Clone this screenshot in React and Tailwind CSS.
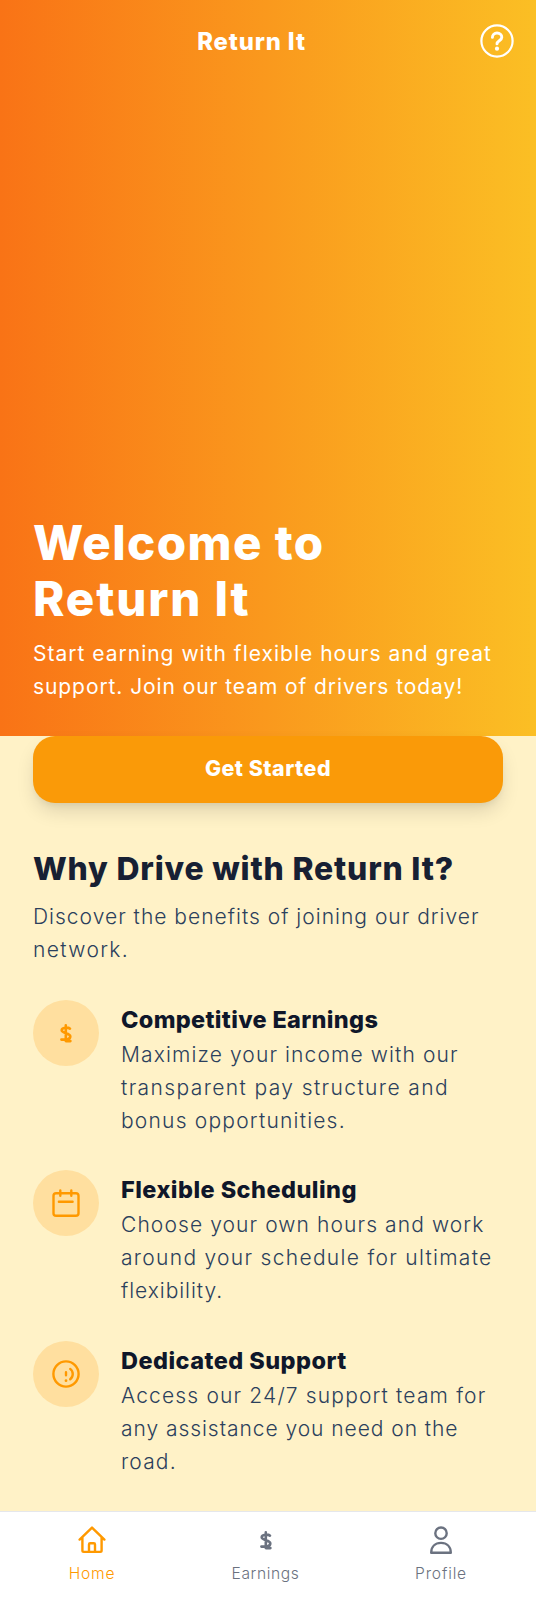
const heading = "font-['Inter','Noto_Sans',sans-serif] font-extrabold";

function Svg({ size = 28, className = "", children }) {
  return (
    <svg
      width={size}
      height={size}
      viewBox={`0 0 ${size} ${size}`}
      fill="none"
      stroke="currentColor"
      strokeWidth="2.4"
      strokeLinecap="round"
      strokeLinejoin="round"
      className={`block shrink-0 ${className}`}
      aria-hidden="true"
    >
      {children}
    </svg>
  );
}

function HelpIcon() {
  return (
    <Svg size={34}>
      <circle cx="17" cy="17" r="15.6" strokeWidth="2.2" />
      <path
        strokeWidth="2.9"
        d="M12.4 13.4C12.4 10.8 14.4 9 17 9C19.9 9 21.8 10.9 21.8 13.2C21.8 16.7 17 16.8 17 19.9"
      />
      <circle cx="17" cy="24.7" r="2.1" fill="currentColor" stroke="none" />
    </Svg>
  );
}

function DollarIcon() {
  return (
    <Svg>
      <path
        strokeWidth="2.6"
        d="M13.8 6.4V22M18 9.7C16.4 8.2 9.7 8 9.7 11.3C9.7 14.7 18.3 13.7 18.3 17.4C18.3 20.2 15.6 20.6 9.4 20.6M13.8 22.1H18.4"
      />
    </Svg>
  );
}

function CalendarIcon() {
  return (
    <Svg>
      <rect x="1.5" y="4.2" width="25" height="22.6" rx="2.6" />
      <path d="M8.3 1.5V6.7M19.3 1.5V6.7M6.9 12.7H20.6" />
    </Svg>
  );
}

function SupportIcon() {
  return (
    <Svg>
      <circle cx="14" cy="14" r="12.6" />
      <path d="M14 12.3V15.3M18.2 8.9C21.6 11.4 21.6 16.8 18.2 19.3" />
      <circle cx="14" cy="20.7" r="1.4" fill="currentColor" stroke="none" />
    </Svg>
  );
}

function HomeIcon() {
  return (
    <Svg>
      <path d="M1.6 13.6L14 1.6L26.4 13.6M4.4 11.4V24.6Q4.4 25.9 5.7 25.9H22.3Q23.6 25.9 23.6 24.6V11.4" />
      <path d="M11 25.4V18.4Q11 17.2 12.2 17.2H15.8Q17 17.2 17 18.4V25.4" />
    </Svg>
  );
}

function ProfileIcon() {
  return (
    <Svg>
      <circle cx="14" cy="7.2" r="5.7" />
      <path d="M4.2 26.7C4.2 20.6 8.2 16.9 14 16.9S23.8 20.6 23.8 26.7Z" />
    </Svg>
  );
}

function Line({ tracking, children }) {
  return <span className={`block whitespace-nowrap ${tracking}`}>{children}</span>;
}

const benefits = [
  {
    icon: <DollarIcon />,
    title: "Competitive Earnings",
    titleTracking: "tracking-[0.33px]",
    lines: [
      ["Maximize your income with our", "tracking-[1.12px]"],
      ["transparent pay structure and", "tracking-[1.39px]"],
      ["bonus opportunities.", "tracking-[1.21px]"],
    ],
  },
  {
    icon: <CalendarIcon />,
    title: "Flexible Scheduling",
    titleTracking: "tracking-[0.45px]",
    lines: [
      ["Choose your own hours and work", "tracking-[1.1px]"],
      ["around your schedule for ultimate", "tracking-[1.3px]"],
      ["flexibility.", "tracking-[0.95px]"],
    ],
  },
  {
    icon: <SupportIcon />,
    title: "Dedicated Support",
    titleTracking: "tracking-[0.45px]",
    lines: [
      ["Access our 24/7 support team for", "tracking-[1.16px]"],
      ["any assistance you need on the", "tracking-[0.95px]"],
      ["road.", "tracking-[1.15px]"],
    ],
  },
];

const tabs = [
  { label: "Home", icon: <HomeIcon />, className: "w-[184px] text-[#ff9900]", tracking: "tracking-[0.8px]" },
  { label: "Earnings", icon: <DollarIcon />, className: "w-[163px] text-[#6b7280]", tracking: "tracking-[0.6px]" },
  { label: "Profile", icon: <ProfileIcon />, className: "w-[188px] text-[#6b7280]", tracking: "tracking-[0.85px]" },
];

export default function App() {
  return (
    <div className="flex h-[1600px] w-[536px] flex-col overflow-hidden bg-[#fff2c7] font-['Inter','Noto_Sans',sans-serif]">
      <section className="flex h-[736px] shrink-0 flex-col justify-between bg-linear-to-r/srgb from-[#f97316] to-[#fbbf24] text-white">
        <header className="flex h-[82px] items-center pr-[22px] pl-[23px]">
          <h1 className={`${heading} flex-1 pt-px text-center text-[23.8px] tracking-[0.9px]`}>Return It</h1>
          <button aria-label="Help">
            <HelpIcon />
          </button>
        </header>
        <div className="px-[33px] pb-[33px]">
          <h2 className={`${heading} text-[47.5px] leading-[55.5px]`}>
            <Line tracking="tracking-[1.4px]">Welcome to</Line>
            <Line tracking="tracking-[1.85px]">Return It</Line>
          </h2>
          <p className="mt-[10.5px] text-[21px] leading-[33.2px]">
            <Line tracking="tracking-[1px]">Start earning with flexible hours and great</Line>
            <Line tracking="tracking-[0.92px]">support. Join our team of drivers today!</Line>
          </p>
        </div>
      </section>

      <main className="flex-1 px-[33px]">
        <button
          className={`${heading} block h-[66.5px] w-full rounded-[22px] bg-[#fa9a08] pb-0.5 text-center text-[21.4px] tracking-[0.5px] text-white shadow-[0_10px_20px_-3px_rgba(0,0,0,0.14),0_4px_6px_-2px_rgba(0,0,0,0.06)]`}
        >
          Get Started
        </button>
        <h2 className={`${heading} mt-[45.5px] whitespace-nowrap text-[31.9px] leading-[41px] tracking-[0.83px] text-[#172033]`}>
          Why Drive with Return It?
        </h2>
        <p className="mt-[11px] text-[21px] leading-[33px] font-light text-[#2b405c]">
          <Line tracking="tracking-[1.01px]">Discover the benefits of joining our driver</Line>
          <Line tracking="tracking-[1.36px]">network.</Line>
        </p>
        <ul className="mt-[34px] flex flex-col gap-[34px]">
          {benefits.map((b) => (
            <li key={b.title} className="flex h-[136.4px] gap-[22px]">
              <div className="flex size-[66px] shrink-0 items-center justify-center rounded-full bg-[#ffdf9f] text-[#ff9900]">
                {b.icon}
              </div>
              <div className="pt-[4px]">
                <h3 className={`${heading} whitespace-nowrap text-[23.5px] leading-[31px] text-[#0f172a] ${b.titleTracking}`}>
                  {b.title}
                </h3>
                <p className="mt-[3px] text-[21px] leading-[33px] font-light text-[#2b405c]">
                  {b.lines.map(([text, tracking]) => (
                    <Line key={text} tracking={tracking}>
                      {text}
                    </Line>
                  ))}
                </p>
              </div>
            </li>
          ))}
        </ul>
      </main>

      <nav className="flex h-[89px] shrink-0 border-t border-[#e5e7eb] bg-white">
        {tabs.map((t) => (
          <a key={t.label} className={`flex flex-col items-center pt-[14px] ${t.className}`}>
            {t.icon}
            <span className={`mt-[9px] text-[15.6px] leading-[22px] font-light ${t.tracking}`}>{t.label}</span>
          </a>
        ))}
      </nav>
    </div>
  );
}
